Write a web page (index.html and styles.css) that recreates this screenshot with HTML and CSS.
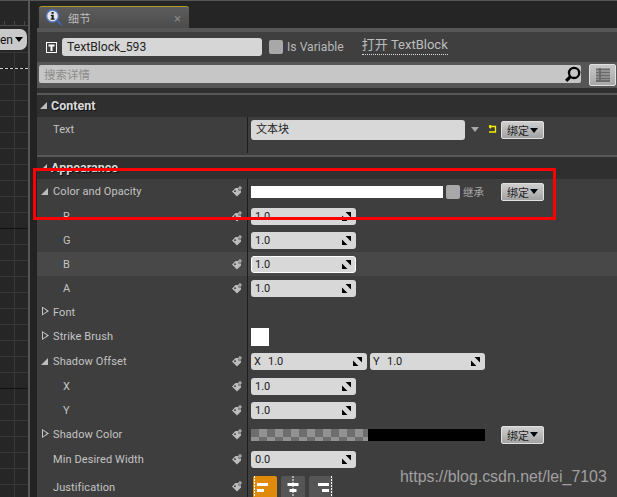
FILE: index.html
```html
<!DOCTYPE html>
<html lang="zh">
<head>
<meta charset="utf-8">
<title>细节</title>
<link rel="stylesheet" href="styles.css">
</head>
<body>
<svg class="defs" width="0" height="0" aria-hidden="true">
  <symbol id="tag" viewBox="0 0 11 11">
    <path d="M0 5.500 L3.500 2 H6.500 V4.500 H9 V6.500 L5 10.500 Z" fill="#bcbcbc"/>
    <path d="M8 0 V4 M6 2 H10" stroke="#bcbcbc" stroke-width="1.2" fill="none"/>
    <circle cx="3" cy="5.200" r="0.900" fill="#3a3a3a"/>
  </symbol>
  <symbol id="spin" viewBox="0 0 10 10">
    <path d="M4 0 H10 V6 Z" fill="#000"/>
    <path d="M0 4 L6 10 H0 Z" fill="#000"/>
  </symbol>
</svg>
<div class="app">
  <aside class="canvas">
    <div class="ruler"></div>
    <div class="screen-btn"><span>en</span><i class="caret"></i></div>
    <div class="grid"><div class="dashed"></div></div>
  </aside>
  <div class="gutter"></div>
  <main class="details">
    <div class="tabbar">
      <div class="tab">
        <svg class="tab-icon" width="18" height="18" viewBox="0 0 18 18">
          <circle cx="7.500" cy="7" r="6" fill="#e4e6ec" stroke="#5578bd" stroke-width="1.500"/>
          <path d="M12 11.500 L16.500 16" stroke="#3f62a8" stroke-width="2.400"/>
          <path d="M6.500 3 H8.700 V4.800 H6.500 Z M5.800 5.800 H8.700 V9.500 H9.700 V10.800 H5.600 V9.500 H6.600 V7.100 H5.800 Z" fill="#1c1c1c"/>
        </svg>
        <span class="tab-title">细节</span>
        <span class="tab-close">×</span>
      </div>
    </div>
    <div class="head">
      <svg class="t-icon" width="11" height="11" viewBox="0 0 11 11">
        <rect x="0.500" y="0.500" width="10" height="10" fill="none" stroke="#fff"/>
        <path d="M2.500 2.500 H8.500 V4.500 H6.500 V9 H4.500 V4.500 H2.500 Z" fill="#fff"/>
      </svg>
      <div class="name-input">TextBlock_593</div>
      <div class="check"></div>
      <span class="is-var">Is Variable</span>
      <span class="open-link">打开 TextBlock</span>
    </div>
    <div class="searchband">
      <div class="search">
        <span>搜索详情</span>
        <svg width="17" height="17" viewBox="0 0 16 16">
          <circle cx="9.500" cy="6.500" r="4.800" fill="none" stroke="#000" stroke-width="2.200"/>
          <path d="M6 10 L2 14" stroke="#000" stroke-width="3"/>
        </svg>
      </div>
      <div class="view-btn">
        <svg width="14" height="14" viewBox="0 0 14 14">
          <path d="M0 1.500 H14 M0 4.500 H14 M0 7.500 H14 M0 10.500 H14 M0 13 H14 M4 0 V14" stroke="#6a6a6a" stroke-width="2" fill="none"/>
        </svg>
      </div>
    </div>
    <div class="cutoff"></div>

    <section class="group">
      <div class="section-head"><i class="tri-open"></i><span>Content</span></div>
      <div class="row row-text">
        <div class="label l-top"><span class="slot"></span><span class="name">Text</span></div>
        <div class="value v-top">
          <div class="field text-field">文本块</div>
          <i class="combo-arrow"></i>
          <svg class="reset" width="9" height="9" viewBox="0 0 9 9"><path d="M1 1.500 H7.500 V7 H1 M1 1.500 L3 0 M1 1.500 L3 3.200" fill="none" stroke="#f4f000" stroke-width="1.300"/></svg>
          <div class="bind"><span>绑定</span><i class="caret"></i></div>
        </div>
      </div>
    </section>

    <section class="group">
      <div class="section-head"><i class="tri-open"></i><span>Appearance</span></div>

      <div class="row h25">
        <div class="label"><i class="tri-open small"></i><span class="name">Color and Opacity</span><svg class="tag"><use href="#tag"/></svg></div>
        <div class="value">
          <div class="color-white"></div>
          <div class="check inherit"></div>
          <span class="inherit-label">继承</span>
          <div class="bind"><span>绑定</span><i class="caret"></i></div>
        </div>
      </div>

      <div class="row">
        <div class="label"><span class="slot deep"></span><span class="name">R</span><svg class="tag"><use href="#tag"/></svg></div>
        <div class="value"><div class="field num"><span>1.0</span><svg class="spin"><use href="#spin"/></svg></div></div>
      </div>
      <div class="row">
        <div class="label"><span class="slot deep"></span><span class="name">G</span><svg class="tag"><use href="#tag"/></svg></div>
        <div class="value"><div class="field num"><span>1.0</span><svg class="spin"><use href="#spin"/></svg></div></div>
      </div>
      <div class="row hover">
        <div class="label"><span class="slot deep"></span><span class="name">B</span><svg class="tag"><use href="#tag"/></svg></div>
        <div class="value"><div class="field num focus"><span>1.0</span><svg class="spin"><use href="#spin"/></svg></div></div>
      </div>
      <div class="row">
        <div class="label"><span class="slot deep"></span><span class="name">A</span><svg class="tag"><use href="#tag"/></svg></div>
        <div class="value"><div class="field num"><span>1.0</span><svg class="spin"><use href="#spin"/></svg></div></div>
      </div>

      <div class="row">
        <div class="label"><i class="tri-closed"></i><span class="name">Font</span></div>
        <div class="value"></div>
      </div>
      <div class="row h25">
        <div class="label"><i class="tri-closed"></i><span class="name">Strike Brush</span></div>
        <div class="value"><div class="swatch"></div></div>
      </div>
      <div class="row h25">
        <div class="label"><i class="tri-open small"></i><span class="name">Shadow Offset</span><svg class="tag"><use href="#tag"/></svg></div>
        <div class="value vec">
          <div class="field vec-field"><b>X</b><span>1.0</span><svg class="spin"><use href="#spin"/></svg></div>
          <div class="field vec-field"><b>Y</b><span>1.0</span><svg class="spin"><use href="#spin"/></svg></div>
        </div>
      </div>
      <div class="row">
        <div class="label"><span class="slot deep"></span><span class="name">X</span><svg class="tag"><use href="#tag"/></svg></div>
        <div class="value"><div class="field num"><span>1.0</span><svg class="spin"><use href="#spin"/></svg></div></div>
      </div>
      <div class="row">
        <div class="label"><span class="slot deep"></span><span class="name">Y</span><svg class="tag"><use href="#tag"/></svg></div>
        <div class="value"><div class="field num"><span>1.0</span><svg class="spin"><use href="#spin"/></svg></div></div>
      </div>
      <div class="row h25">
        <div class="label"><i class="tri-closed"></i><span class="name">Shadow Color</span><svg class="tag"><use href="#tag"/></svg></div>
        <div class="value">
          <div class="color-alpha"><div class="checker"></div><div class="black"></div></div>
          <div class="bind far"><span>绑定</span><i class="caret"></i></div>
        </div>
      </div>
      <div class="row h25">
        <div class="label"><span class="slot"></span><span class="name">Min Desired Width</span><svg class="tag"><use href="#tag"/></svg></div>
        <div class="value"><div class="field num"><span>0.0</span><svg class="spin"><use href="#spin"/></svg></div></div>
      </div>
      <div class="row h25 last">
        <div class="label"><span class="slot"></span><span class="name">Justification</span><svg class="tag"><use href="#tag"/></svg></div>
        <div class="value justify">
          <div class="jbtn on">
            <svg width="24" height="21" viewBox="0 0 24 21"><path d="M1.500 0 V21" stroke="#fff" stroke-dasharray="2 1"/><path d="M4 7 H15 V10 H4 Z M4 13 H11 V16 H4 Z" fill="#fff"/></svg>
          </div>
          <div class="jbtn">
            <svg width="24" height="21" viewBox="0 0 24 21"><path d="M12 0 V21" stroke="#fff" stroke-dasharray="2 1"/><path d="M6.500 7 H17.500 V10 H6.500 Z M8.500 13 H15.500 V16 H8.500 Z" fill="#fff"/></svg>
          </div>
          <div class="jbtn">
            <svg width="24" height="21" viewBox="0 0 24 21"><path d="M22.500 0 V21" stroke="#fff" stroke-dasharray="2 1"/><path d="M9 7 H20 V10 H9 Z M13 13 H20 V16 H13 Z" fill="#fff"/></svg>
          </div>
        </div>
      </div>
    </section>
  </main>
  <div class="redbox"></div>
  <div class="watermark">https://blog.csdn.net/lei_7103</div>
</div>
</body>
</html>
```

FILE: styles.css
```css
* { box-sizing: border-box; }
html, body { margin: 0; padding: 0; background: #252525; }
body { font-family: Roboto, "Noto Sans CJK SC", sans-serif; overflow: hidden; }
.defs { position: absolute; }

.app {
  position: relative;
  display: flex;
  width: 617px;
  height: 497px;
  overflow: hidden;
  border-top: 1px solid #565656;
  background: #252525;
}

/* left canvas */
.canvas {
  width: 28px;
  flex: none;
  display: flex;
  flex-direction: column;
  background: #262626;
}
.ruler {
  height: 25px;
  flex: none;
  border-bottom: 1px solid #4a4a4a;
  background:
    repeating-linear-gradient(90deg, transparent 0 4px, #484848 4px 5px, transparent 5px 10px) 0 20px / 100% 5px no-repeat;
}
.screen-btn {
  height: 21px;
  margin-top: 3px;
  margin-left: -6px;
  margin-right: 1px;
  flex: none;
  border-radius: 0 7px 7px 0;
  background: #c9c9c9;
  color: #111;
  font-size: 12px;
  display: flex;
  align-items: center;
  justify-content: flex-end;
  gap: 2px;
  padding-right: 4px;
}
.grid {
  position: relative;
  flex: 1;
  margin-top: 2px;
  background:
    linear-gradient(#111 0 1px, transparent 1px) 0 16px / 100% 160px,
    linear-gradient(#383838 0 1px, transparent 1px) 0 0 / 100% 16px,
    linear-gradient(90deg, #383838 0 1px, transparent 1px) 14px 0 / 16px 100%;
}
.dashed {
  position: absolute;
  left: 0;
  right: 0;
  top: 16px;
  border-top: 1px dashed #cfcfcf;
}
.gutter {
  width: 9px;
  flex: none;
  border-left: 2px solid #565656;
  background: #222;
}
.caret {
  display: inline-block;
  width: 0;
  height: 0;
  border-left: 4.500px solid transparent;
  border-right: 4.500px solid transparent;
  border-top: 5px solid #000;
}

/* details panel */
.details {
  flex: 1;
  min-width: 0;
  display: flex;
  flex-direction: column;
}
.tabbar {
  height: 27px;
  flex: none;
  padding: 5px 0 0 2px;
  background: #252525;
}
.tab {
  width: 150px;
  height: 22px;
  display: flex;
  align-items: center;
  padding: 1px 0 0 6px;
  border-top: 1px solid #b09a2a;
  border-radius: 3px 3px 0 0;
  background: linear-gradient(#5c5c5c, #4c4c4c);
}
.tab-icon { flex: none; }
.tab-title { margin-left: 5px; font-size: 11px; color: #bdbdbd; letter-spacing: .5px; }
.tab-close { margin-left: auto; margin-right: 8px; font-size: 13px; color: #888; }

.head {
  height: 34px;
  flex: none;
  display: flex;
  align-items: center;
  padding: 0 0 0 9px;
  border-top: 4px solid #565656;
  background: #3f3f3f;
}
.t-icon { flex: none; }
.name-input {
  width: 200px;
  height: 18px;
  margin-left: 5px;
  padding-left: 5px;
  border-radius: 3px;
  background: #d6d6d6;
  color: #222;
  font-size: 12.200px;
  line-height: 18px;
}
.check {
  width: 14px;
  height: 14px;
  flex: none;
  border-radius: 2px;
  background: #a8a8a8;
}
.head .check { margin-left: 7px; }
.is-var { margin-left: 4px; font-size: 12.200px; color: #b8b8b8; }
.open-link {
  margin-left: 18px;
  padding-bottom: 1px;
  font-size: 13px;
  line-height: 16px;
  margin-top: -3px;
  color: #bdbdbd;
  border-bottom: 1px dotted #e0e0e0;
}

.searchband {
  height: 26px;
  flex: none;
  display: flex;
  align-items: center;
  padding: 0 1px 0 2px;
  background: #565656;
}
.search {
  width: 542px;
  height: 18px;
  margin-top: -2px;
  display: flex;
  align-items: center;
  justify-content: space-between;
  padding: 0 0 0 5px;
  border-radius: 2px;
  background: #c6c6c6;
  color: #8d8d8d;
  font-size: 11.500px;
}
.view-btn {
  width: 27px;
  height: 22px;
  margin-left: 8px;
  display: flex;
  align-items: center;
  justify-content: center;
  border: 1px solid #e0e0e0;
  border-radius: 2px;
  background: linear-gradient(#c8c8c8, #a8a8a8);
}
.cutoff {
  height: 5px;
  flex: none;
  background: #2f2f2f;
}

.group { flex: none; border-top: 2px solid #585858; }
.section-head {
  height: 22px;
  display: flex;
  align-items: center;
  padding: 0 0 2px 3px;
  background: #2f2f2f;
  color: #d9d9d9;
  font-size: 12.500px;
  font-weight: 700;
  text-shadow: 1px 1px 0 #111;
}
.section-head span { margin-left: 4px; }
.tri-open {
  width: 0;
  height: 0;
  flex: none;
  border-bottom: 7px solid #bdbdbd;
  border-left: 7px solid transparent;
}
.tri-open.small { margin: 0 5px 0 4px; }
.tri-closed {
  width: 7px;
  height: 9px;
  flex: none;
  margin: 0 4px 2px 5px;
  background: #c8c8c8;
  clip-path: polygon(0 0, 100% 50%, 0 100%, 0 0, 1px 18%, 1px 82%, 72% 50%, 1px 18%);
}

.row {
  display: flex;
  height: 24px;
  background: #3e3e3e;
}
.row.h25 { height: 25px; }
.row.hover { background: #484848; }
.row.last { height: 32px; }
.row-text { height: 38px; }
.label {
  width: 211px;
  flex: none;
  display: flex;
  align-items: center;
  padding-right: 4px;
  border-right: 1px solid #1c1c1c;
  color: #c4c4c4;
  font-size: 11px;
  letter-spacing: .1px;
}
.row-text .label { align-items: flex-start; height: 36px; padding-top: 6px; }
.row.last .label { align-items: flex-start; padding-top: 9px; }
.slot { width: 16px; flex: none; }
.slot.deep { width: 26px; }
.name { flex: 1; }
.tag { width: 11px; height: 11px; flex: none; }
.value {
  flex: 1;
  min-width: 0;
  display: flex;
  align-items: center;
  padding-left: 3px;
}
.v-top { align-items: flex-start; padding-top: 3px; }
.field {
  display: flex;
  align-items: center;
  height: 17px;
  border-radius: 3px;
  background: #d8d8d8;
  color: #222;
  font-size: 11px;
}
.text-field { width: 214px; height: 20px; padding: 0 0 4px 5px; }
.combo-arrow {
  margin: 7px 0 0 6px;
  width: 0;
  height: 0;
  border-left: 4.500px solid transparent;
  border-right: 4.500px solid transparent;
  border-top: 5px solid #a8a8a8;
}
.reset { margin: 5px 0 0 9px; }
.bind {
  width: 43px;
  height: 18px;
  flex: none;
  margin-left: 4px;
  display: flex;
  align-items: center;
  justify-content: center;
  gap: 1px;
  border: 1px solid #e0e0e0;
  border-radius: 2px;
  background: linear-gradient(#cfcfcf, #a2a2a2);
  color: #222;
  font-size: 11px;
}
.v-top .bind { margin-top: 1px; }
.num { width: 105px; justify-content: space-between; padding: 0 5px 0 4px; }
.num.focus { border: 1px solid #fff; padding: 0 4px 0 3px; }
.spin { width: 9px; height: 9px; flex: none; }
.color-white { width: 192px; height: 12px; flex: none; background: #fff; }
.check.inherit { margin-left: 3px; }
.inherit-label { margin-left: 3px; font-size: 10.500px; color: #a8a8a8; width: 34px; flex: none; }
.swatch { width: 18px; height: 18px; background: #fff; }
.vec { gap: 3px; }
.vec-field { width: 116px; padding: 0 5px 0 3px; }
.vec-field + .vec-field { width: 115px; }
.vec-field b { font-weight: 400; width: 14px; flex: none; }
.vec-field .spin { margin-left: auto; }
.color-alpha { display: flex; width: 234px; height: 12px; flex: none; }
.checker {
  width: 117px;
  background:
    linear-gradient(90deg, #6e6e6e 50%, #929292 50%) 0 0 / 16px 8px repeat-x,
    linear-gradient(90deg, #929292 50%, #6e6e6e 50%) 0 8px / 16px 4px repeat-x;
}
.black { flex: 1; background: #000; }
.bind.far { margin-left: 16px; }
.justify { align-items: flex-start; gap: 4px; padding-left: 5px; padding-top: 4px; }
.jbtn {
  width: 24px;
  height: 24px;
  border-radius: 2px 2px 0 0;
  background: #555;
}
.jbtn svg { display: block; }
.jbtn.on { background: #e08a0a; }

/* overlays */
.redbox {
  position: absolute;
  left: 33px;
  top: 167px;
  width: 523px;
  height: 52px;
  border: 3px solid #f00;
}
.watermark {
  position: absolute;
  left: 400px;
  top: 467px;
  font-family: "Liberation Sans", sans-serif;
  font-size: 15.900px;
  color: #a0a0a0;
  white-space: nowrap;
}
```
